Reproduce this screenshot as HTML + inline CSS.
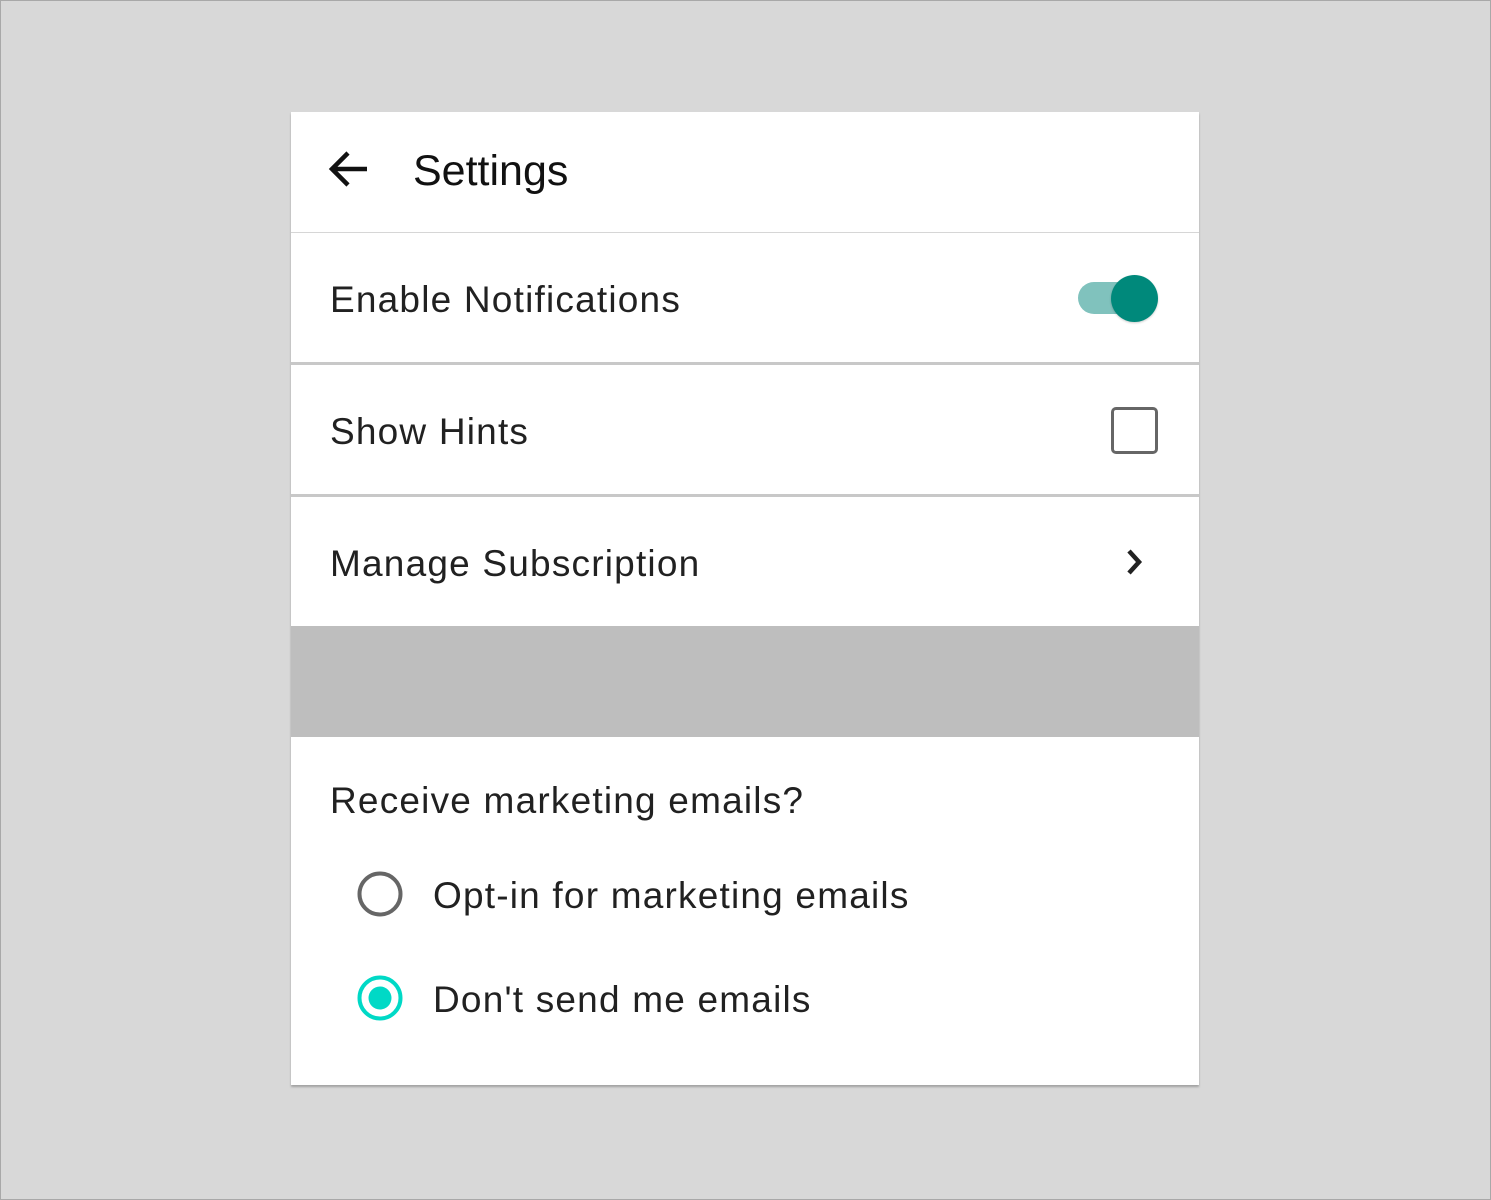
<!DOCTYPE html>
<html><head><style>
html,body{margin:0;padding:0}
body{width:1491px;height:1200px;background:#d8d8d8;position:relative;overflow:hidden;font-family:"Liberation Sans",sans-serif;color:#212121;box-sizing:border-box;border:1px solid #a8a8a8}
.a{position:absolute;line-height:normal;white-space:nowrap}
.t{font-size:37px;letter-spacing:1.2px}
</style></head><body>
<div style="position:absolute;left:290px;top:111px;width:908px;height:973px;background:#fff;box-shadow:0 2px 2px rgba(0,0,0,0.25)"></div>
<div style="position:absolute;left:290px;top:231px;width:908px;height:1px;background:#d6d6d6"></div>
<div style="position:absolute;left:290px;top:361px;width:908px;height:3px;background:#c8c8c8"></div>
<div style="position:absolute;left:290px;top:493px;width:908px;height:3px;background:#c8c8c8"></div>
<div style="position:absolute;left:290px;top:625px;width:908px;height:111px;background:#bebebe"></div>

<svg class="a" style="left:326px;top:148px" width="42" height="40" viewBox="0 0 42 40"><path d="M40 20H6M21 4L5 20l16 16" fill="none" stroke="#111" stroke-width="4.5"/></svg>
<div class="a" style="left:412px;top:146px;font-size:43px;color:#111">Settings</div>

<div class="a t" style="left:329px;top:278px">Enable Notifications</div>
<div style="position:absolute;left:1077px;top:281px;width:62px;height:32px;border-radius:16px;background:#80c2bd"></div>
<div style="position:absolute;left:1110px;top:274px;width:47px;height:47px;border-radius:50%;background:#00897b;box-shadow:0 1px 2px rgba(0,0,0,.2)"></div>

<div class="a t" style="left:329px;top:410px">Show Hints</div>
<div style="position:absolute;left:1110px;top:406px;width:41px;height:41px;border:3px solid #666;border-radius:5px"></div>

<div class="a t" style="left:329px;top:542px">Manage Subscription</div>
<svg class="a" style="left:1122px;top:546px" width="24" height="30" viewBox="0 0 24 30"><path d="M6 4l10 11L6 26" fill="none" stroke="#222" stroke-width="4.5"/></svg>

<div class="a t" style="left:329px;top:779px">Receive marketing emails?</div>
<svg class="a" style="left:354px;top:868px" width="52" height="52"><circle cx="25" cy="25" r="20.5" fill="none" stroke="#666" stroke-width="4"/></svg>
<div class="a t" style="left:432px;top:874px">Opt-in for marketing emails</div>
<svg class="a" style="left:354px;top:972px" width="52" height="52"><circle cx="25" cy="25" r="20.5" fill="none" stroke="#00d9c6" stroke-width="4"/><circle cx="25" cy="25" r="11.5" fill="#00d9c6"/></svg>
<div class="a t" style="left:432px;top:978px">Don't send me emails</div>
</body></html>
